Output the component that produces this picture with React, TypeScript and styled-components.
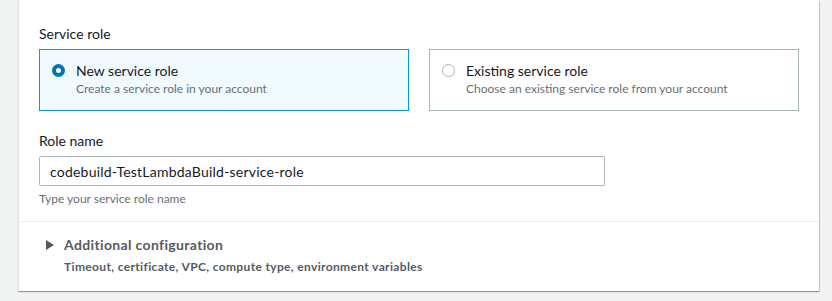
import React, { useState } from 'react';
import styled, { createGlobalStyle } from 'styled-components';

const GlobalStyle = createGlobalStyle`
  html, body {
    margin: 0;
    padding: 0;
    background: #f2f3f3;
    font-family: Lato, "Liberation Sans", Arial, sans-serif;
    color: #16191f;
  }
  * { box-sizing: border-box; }
`;

const Page = styled.div`
  width: 832px;
  height: 301px;
  overflow: hidden;
  padding: 0 13px 0 18px;
`;

const Panel = styled.div`
  background: #ffffff;
  border-left: 1px solid #e3e6e6;
  box-shadow: 0 1px 1px 0 rgba(0, 28, 36, 0.3), 1px 1px 1px 0 rgba(0, 28, 36, 0.15);
`;

const Body = styled.div`
  padding: 24px 20px 14px 20px;
`;

const FieldLabel = styled.div<{ $top?: number }>`
  font-size: 14px;
  line-height: 20px;
  color: #16191f;
  margin-top: ${p => p.$top ?? 0}px;
  margin-bottom: 5px;
`;

const Tiles = styled.div`
  display: grid;
  grid-template-columns: 1fr 1fr;
  gap: 20px;
`;

const Tile = styled.label<{ $selected: boolean }>`
  display: flex;
  align-items: flex-start;
  gap: 11px;
  height: 62px;
  padding: 12px 12px 0 12px;
  border: 1px solid ${p => (p.$selected ? '#00a1c9' : '#aab7b8')};
  background: ${p => (p.$selected ? '#f1faff' : '#ffffff')};
  cursor: pointer;
`;

const Radio = styled.span<{ $checked: boolean }>`
  flex: none;
  width: 13px;
  height: 13px;
  margin-top: 2px;
  border-radius: 50%;
  border: ${p => (p.$checked ? '4px solid #0073bb' : '1px solid #aab7b8')};
  background: #ffffff;
`;

const TileText = styled.div`
  display: flex;
  flex-direction: column;
`;

const TileTitle = styled.span`
  font-size: 14px;
  line-height: 18px;
  color: #16191f;
`;

const TileDesc = styled.span`
  font-size: 12px;
  line-height: 18px;
  color: #687078;
`;

const TextInput = styled.input`
  display: block;
  width: 566px;
  height: 30px;
  padding: 0 10px;
  border: 1px solid #aab7b8;
  border-radius: 2px;
  font-family: inherit;
  font-size: 14px;
  letter-spacing: 0.22px;
  color: #16191f;
  background: #ffffff;
  &:focus { outline: none; border-color: #00a1c9; }
`;

const Hint = styled.div`
  font-size: 12px;
  line-height: 16px;
  color: #687078;
  margin-top: 5px;
`;

const Divider = styled.div`
  border-top: 1px solid #eaeded;
`;

const Expand = styled.div`
  display: flex;
  gap: 10px;
  padding: 13px 20px 14px 27px;
  cursor: pointer;
`;

const Caret = styled.svg`
  flex: none;
  margin-top: 5px;
`;

const ExpandText = styled.div`
  display: flex;
  flex-direction: column;
  gap: 2px;
  color: #545b64;
  font-weight: 700;
  letter-spacing: 0.35px;
`;

const ExpandTitle = styled.span`
  font-size: 14px;
  line-height: 20px;
`;

const ExpandDesc = styled.span`
  font-size: 12px;
  line-height: 20px;
`;

const options = [
  { id: 'new', title: 'New service role', desc: 'Create a service role in your account' },
  { id: 'existing', title: 'Existing service role', desc: 'Choose an existing service role from your account' },
];

export default function App() {
  const [role, setRole] = useState('new');
  const [name, setName] = useState('codebuild-TestLambdaBuild-service-role');

  return (
    <>
      <GlobalStyle />
      <Page>
        <Panel>
          <Body>
            <FieldLabel>Service role</FieldLabel>
            <Tiles>
              {options.map(o => (
                <Tile key={o.id} $selected={role === o.id} onClick={() => setRole(o.id)}>
                  <Radio $checked={role === o.id} />
                  <TileText>
                    <TileTitle>{o.title}</TileTitle>
                    <TileDesc>{o.desc}</TileDesc>
                  </TileText>
                </Tile>
              ))}
            </Tiles>
            <FieldLabel $top={20}>Role name</FieldLabel>
            <TextInput value={name} onChange={e => setName(e.target.value)} />
            <Hint>Type your service role name</Hint>
          </Body>
          <Divider />
          <Expand>
            <Caret width="8" height="10" viewBox="0 0 8 10">
              <path d="M0 0 L8 5 L0 10 Z" fill="#545b64" />
            </Caret>
            <ExpandText>
              <ExpandTitle>Additional configuration</ExpandTitle>
              <ExpandDesc>Timeout, certificate, VPC, compute type, environment variables</ExpandDesc>
            </ExpandText>
          </Expand>
        </Panel>
      </Page>
    </>
  );
}
